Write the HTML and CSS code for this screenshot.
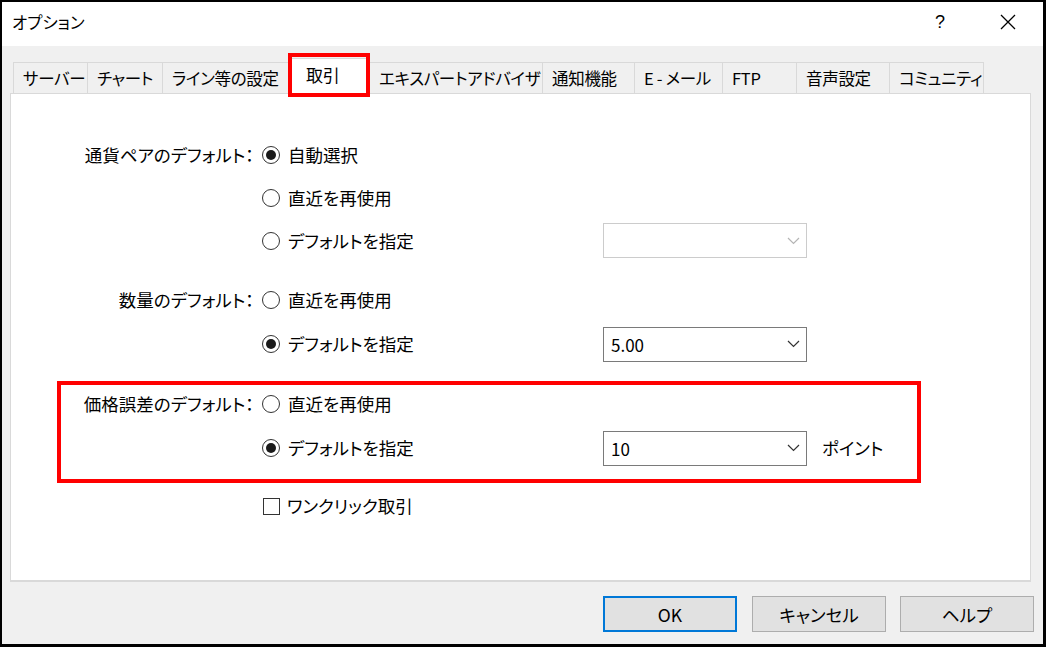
FILE: index.html
```html
<!DOCTYPE html>
<html lang="ja">
<head>
<meta charset="utf-8">
<title>オプション</title>
<link rel="stylesheet" href="styles.css">
</head>
<body>
<div class="window">
  <div class="titlebar">
    <span class="title">オプション</span>
    <div class="title-ctrls">
      <span class="ctrl help">?</span>
      <span class="ctrl close">
        <svg width="16" height="16" viewBox="0 0 16 16"><path d="M1 1 L15 15 M15 1 L1 15" stroke="#000" stroke-width="1.3" fill="none"/></svg>
      </span>
    </div>
  </div>
  <div class="body">
    <div class="tabs">
      <div class="tab w74">サーバー</div>
      <div class="tab w75">チャート</div>
      <div class="tab w127">ライン等の設定</div>
      <div class="tab active w80">取引</div>
      <div class="tab w173">エキスパートアドバイザ</div>
      <div class="tab w92">通知機能</div>
      <div class="tab w88">E - メール</div>
      <div class="tab w74">FTP</div>
      <div class="tab w93">音声設定</div>
      <div class="tab w94">コミュニティ</div>
    </div>
    <div class="panel">
      <div class="group g43">
        <span class="label">通貨ペアのデフォルト：</span>
        <label class="opt"><span class="radio checked"></span>自動選択</label>
        <span></span><span></span>
        <span></span>
        <label class="opt"><span class="radio"></span>直近を再使用</label>
        <span></span><span></span>
        <span></span>
        <label class="opt"><span class="radio"></span>デフォルトを指定</label>
        <div class="select disabled"><span></span><svg class="chev" width="13" height="8" viewBox="0 0 13 8"><path d="M1 1 L6.5 6.5 L12 1" stroke="#b5b5b5" stroke-width="1.2" fill="none"/></svg></div>
        <span></span>
      </div>
      <div class="group">
        <span class="label">数量のデフォルト：</span>
        <label class="opt"><span class="radio"></span>直近を再使用</label>
        <span></span><span></span>
        <span></span>
        <label class="opt"><span class="radio checked"></span>デフォルトを指定</label>
        <div class="select"><span>5.00</span><svg class="chev" width="13" height="8" viewBox="0 0 13 8"><path d="M1 1 L6.5 6.5 L12 1" stroke="#333" stroke-width="1.2" fill="none"/></svg></div>
        <span></span>
      </div>
      <div class="group">
        <span class="label">価格誤差のデフォルト：</span>
        <label class="opt"><span class="radio"></span>直近を再使用</label>
        <span></span><span></span>
        <span></span>
        <label class="opt"><span class="radio checked"></span>デフォルトを指定</label>
        <div class="select"><span>10</span><svg class="chev" width="13" height="8" viewBox="0 0 13 8"><path d="M1 1 L6.5 6.5 L12 1" stroke="#333" stroke-width="1.2" fill="none"/></svg></div>
        <span class="unit">ポイント</span>
      </div>
      <div class="group last">
        <span></span>
        <label class="opt"><span class="check"></span>ワンクリック取引</label>
        <span></span><span></span>
      </div>
      <div class="highlight"></div>
    </div>
    <div class="buttons">
      <button class="btn default">OK</button>
      <button class="btn">キャンセル</button>
      <button class="btn">ヘルプ</button>
    </div>
  </div>
</div>
</body>
</html>
```
FILE: styles.css
```css
html, body {
  margin: 0;
  padding: 0;
  background: #000;
}
body {
  font-family: "Noto Sans CJK JP", "Noto Sans", sans-serif;
  font-size: 17.5px;
  color: #000;
  font-feature-settings: "palt";
  line-height: 1;
}
.window {
  width: 1046px;
  height: 647px;
  box-sizing: border-box;
  border: 2px solid #000;
  border-right-width: 3px;
  border-bottom-width: 3px;
  background: #f0f0f0;
  display: flex;
  flex-direction: column;
}
.titlebar {
  height: 44px;
  flex: none;
  background: #fff;
  display: flex;
  align-items: center;
  padding-left: 10px;
  padding-bottom: 4px;
  box-sizing: border-box;
}
.title {
  font-size: 16.5px;
}
.title-ctrls {
  margin-left: auto;
  display: flex;
  align-items: center;
  padding-right: 12px;
  gap: 22px;
}
.ctrl {
  width: 46px;
  display: flex;
  justify-content: center;
  align-items: center;
}
.help {
  font-size: 18px;
  font-family: "Liberation Sans", sans-serif;
}
.body {
  flex: 1;
  padding-top: 16px;
  display: flex;
  flex-direction: column;
}
.tabs {
  display: flex;
  align-items: flex-end;
  height: 31px;
  margin-left: 12px;
  position: relative;
  z-index: 2;
}
.tab {
  height: 31px;
  box-sizing: border-box;
  border: 1px solid #d9d9d9;
  border-bottom: none;
  margin-left: -1px;
  padding-left: 9px;
  display: flex;
  align-items: center;
  background: #f0f0f0;
  white-space: nowrap;
  flex: none;
  font-size: 16.5px;
  letter-spacing: -0.3px;
  overflow: hidden;
}
.tab.active {
  height: 36px;
  margin-bottom: -1px;
  background: #fff;
  padding-left: 16px;
  position: relative;
  padding-bottom: 4px;
  overflow: visible;
  font-size: 17px;
}
.tab.active::after {
  content: "";
  position: absolute;
  left: -2px;
  right: -1px;
  top: -6px;
  bottom: -3px;
  border: 4px solid #ff0000;
  pointer-events: none;
}
.w74 { width: 75px; }
.w75 { width: 76px; }
.w127 { width: 128px; }
.w80 { width: 81px; }
.w173 { width: 174px; }
.w92 { width: 93px; }
.w88 { width: 89px; }
.w93 { width: 94px; }
.w94 { width: 95px; }
.panel {
  position: relative;
  margin-left: 8px;
  width: 1021px;
  height: 489px;
  box-sizing: border-box;
  border: 1px solid #d9d9d9;
  border-bottom-width: 2px;
  background: #fff;
  padding-top: 39px;
  flex: none;
}
.group {
  display: grid;
  grid-template-columns: 251px 341px 204px auto;
  grid-auto-rows: 44px;
  align-items: center;
  margin-bottom: 16px;
}
.group.g43 {
  grid-auto-rows: 43px;
}
.group.last {
  margin-top: -2px;
}
.label {
  text-align: right;
  padding-right: 8px;
  white-space: nowrap;
}
.opt {
  display: flex;
  align-items: center;
  white-space: nowrap;
}
.radio {
  width: 18px;
  height: 18px;
  box-sizing: border-box;
  border: 1px solid #333;
  border-radius: 50%;
  margin-right: 8px;
  display: flex;
  align-items: center;
  justify-content: center;
  flex: none;
}
.radio.checked::after {
  content: "";
  width: 10px;
  height: 10px;
  border-radius: 50%;
  background: #1a1a1a;
}
.check {
  width: 17px;
  height: 17px;
  box-sizing: border-box;
  border: 1px solid #333;
  margin-left: 1px;
  margin-right: 7px;
  flex: none;
}
.select {
  height: 35px;
  box-sizing: border-box;
  border: 1px solid #7a7a7a;
  background: #fff;
  display: flex;
  align-items: center;
  justify-content: space-between;
  padding-left: 7px;
  padding-right: 6px;
  font-size: 17px;
}
.select.disabled {
  border-color: #cccccc;
}
.chev {
  display: block;
}
.unit {
  margin-left: 15px;
  white-space: nowrap;
}
.highlight {
  position: absolute;
  left: 46px;
  top: 287px;
  width: 864px;
  height: 102px;
  box-sizing: border-box;
  border: 4px solid #ff0000;
  pointer-events: none;
}
.buttons {
  display: flex;
  justify-content: flex-end;
  gap: 14px;
  margin-top: 14px;
  padding-right: 9px;
}
.btn {
  width: 134px;
  height: 36px;
  box-sizing: border-box;
  border: 1px solid #adadad;
  background: #e1e1e1;
  font-family: inherit;
  font-size: 17.5px;
  color: #000;
  padding: 0;
  font-feature-settings: "palt";
}
.btn.default {
  border: 2px solid #0078d7;
  margin-right: 1px;
}
```
